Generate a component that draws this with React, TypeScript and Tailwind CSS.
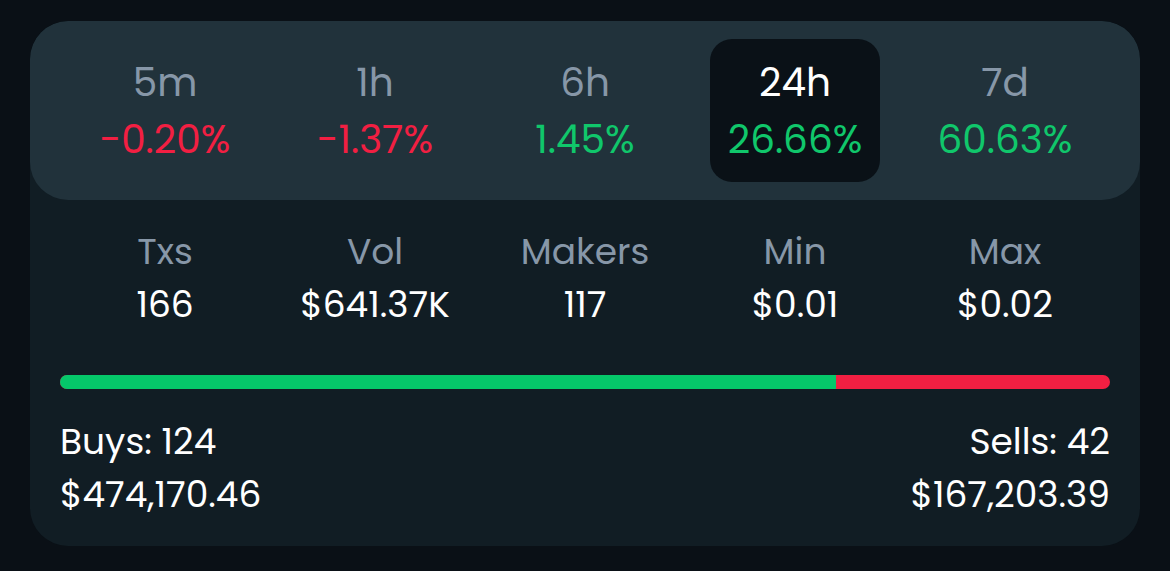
const periods = [
  { label: "5m", value: "-0.20%", up: false },
  { label: "1h", value: "-1.37%", up: false },
  { label: "6h", value: "1.45%", up: true },
  { label: "24h", value: "26.66%", up: true, active: true },
  { label: "7d", value: "60.63%", up: true },
];

const stats = [
  { label: "Txs", value: "166" },
  { label: "Vol", value: "$641.37K" },
  { label: "Makers", value: "117" },
  { label: "Min", value: "$0.01" },
  { label: "Max", value: "$0.02" },
];

const buyVol = 474170.46;
const sellVol = 167203.39;

export default function App() {
  const buyPct = (buyVol / (buyVol + sellVol)) * 100;

  return (
    <div
      className="min-h-[571px] w-full bg-[#0a1016] pt-[21px] px-[30px]"
      style={{ fontFamily: "Poppins, Inter, 'Noto Sans', sans-serif" }}
    >
      <div className="rounded-[38px] bg-[#111d24] overflow-hidden">
        {/* Period tabs */}
        <div className="rounded-[38px] bg-[#21323b] px-[50px] py-[18px] grid grid-cols-5 gap-[40px]">
          {periods.map((p) => (
            <div
              key={p.label}
              className={
                "h-[143px] rounded-[22px] flex flex-col items-center justify-center " +
                (p.active ? "bg-[#0a1117]" : "")
              }
            >
              <span
                className={
                  "text-[39px] leading-[57px] " +
                  (p.active ? "text-white" : "text-[#8797a8]")
                }
              >
                {p.label}
              </span>
              <span
                className={
                  "text-[39px] leading-[57px] " +
                  (p.up ? "text-[#10c76b]" : "text-[#f21f42]")
                }
              >
                {p.value}
              </span>
            </div>
          ))}
        </div>

        {/* Stats */}
        <div className="px-[30px] pt-[25px] grid grid-cols-5">
          {stats.map((s) => (
            <div key={s.label} className="flex flex-col items-center">
              <span className="text-[36px] leading-[53px] text-[#8797a8]">{s.label}</span>
              <span className="text-[36px] leading-[53px] text-white">{s.value}</span>
            </div>
          ))}
        </div>

        {/* Buy / sell bar */}
        <div className="px-[30px] pt-[44px]">
          <div className="h-[14px] rounded-full bg-[#f21f42] overflow-hidden flex">
            <div className="h-full bg-[#05c86a]" style={{ width: `${buyPct}%` }} />
          </div>
        </div>

        <div className="px-[30px] pt-[26px] pb-[25px] flex justify-between text-white text-[36px] leading-[53px]">
          <div className="flex flex-col">
            <span>Buys: 124</span>
            <span>$474,170.46</span>
          </div>
          <div className="flex flex-col items-end">
            <span>Sells: 42</span>
            <span>$167,203.39</span>
          </div>
        </div>
      </div>
    </div>
  );
}
